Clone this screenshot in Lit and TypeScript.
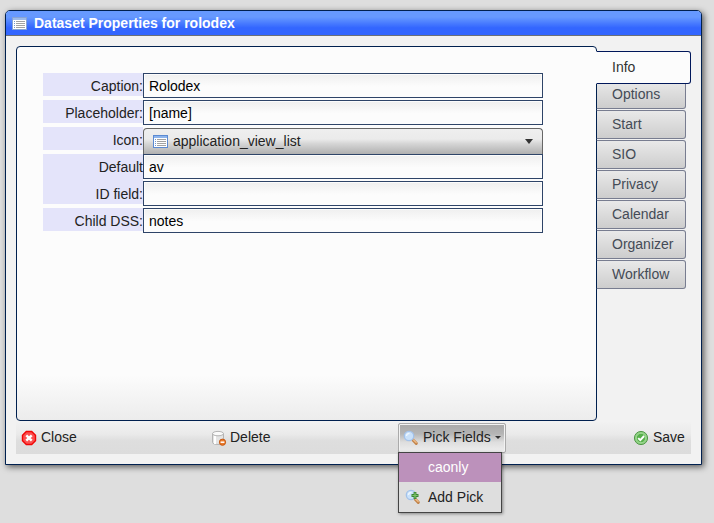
import { LitElement, html, css, svg } from "lit";
import { customElement, state } from "lit/decorators.js";
import { classMap } from "lit/directives/class-map.js";

const listIcon = (frame: string, light: string) => svg`<svg width="16" height="16" viewBox="0 0 16 16" shape-rendering="crispEdges">
  <rect x="0.5" y="2.5" width="14" height="12" fill="#fff" stroke=${frame}/>
  <rect x="1" y="3" width="13" height="2" fill=${light}/>
  <path d="M2 6.5h1M2 8.5h1M2 10.5h1M2 12.5h1" stroke="#6f97d3"/>
  <path d="M4 6.5h9M4 8.5h9M4 10.5h9M4 12.5h9" stroke="#a2a2a2"/>
</svg>`;

const closeIcon = svg`<svg width="16" height="16" viewBox="0 0 16 16">
  <path d="M5.3 1.5h5.4l3.8 3.8v5.4l-3.8 3.8H5.3l-3.8-3.8V5.3z" fill="#fb5151" stroke="#f00606" stroke-width="1.4"/>
  <path d="M5.3 5.3l5.4 5.4M10.7 5.3l-5.4 5.4" stroke="#fff" stroke-width="2.4"/>
</svg>`;

const deleteIcon = svg`<svg width="16" height="16" viewBox="0 0 16 16">
  <path d="M1.5 3.5v9c0 2.6 11 2.6 11 0v-9" fill="#e4e4e4" stroke="#b4b4b4"/>
  <path d="M4 6v8" stroke="#fff" stroke-width="2"/>
  <ellipse cx="7" cy="3.6" rx="5.5" ry="2.2" fill="#fafafa" stroke="#b4b4b4"/>
  <circle cx="11.5" cy="12.2" r="3.1" fill="#ea7a2c" stroke="#c75a14"/>
  <path d="M9.6 12.2h3.8" stroke="#fff" stroke-width="1.5"/>
</svg>`;

const lens = svg`
  <path d="M10.2 10.2l3.1 3.2" stroke="#c2834a" stroke-width="3" stroke-linecap="round"/>
  <path d="M10.6 10l2.6 2.6" stroke="#f2c08b" stroke-width="1.2" stroke-linecap="round"/>
  <circle cx="6" cy="6" r="4.7" fill="#c9e1fa" stroke="#a3c2ea" stroke-width="1.3"/>
  <path d="M3.5 6a2.6 2.6 0 0 1 3-2.5" stroke="#eef7ff" stroke-width="1.4" fill="none"/>`;
const searchIcon = svg`<svg width="16" height="16" viewBox="0 0 16 16">${lens}</svg>`;
const addSearchIcon = svg`<svg width="16" height="16" viewBox="0 0 16 16">${lens}
  <path d="M10 3v7M6.5 6.5h7" stroke="#3d8636" stroke-width="2.8"/>
  <path d="M10 3.8v5.4M7.3 6.5h5.4" stroke="#7cc469" stroke-width="1.2"/>
</svg>`;

const saveIcon = svg`<svg width="16" height="16" viewBox="0 0 16 16">
  <circle cx="8" cy="8" r="6.6" fill="#8fd083" stroke="#46913d" stroke-width=".9"/>
  <circle cx="8" cy="8" r="4.7" fill="#58b04c" stroke="#a9dfa0" stroke-width=".8"/>
  <path d="M5.2 8.1l2.1 2.1 3.8-4.2" fill="none" stroke="#fff" stroke-width="1.9"/>
</svg>`;

@customElement("app-root")
export class AppRoot extends LitElement {
  @state() private tab = "Info";

  private tabs = ["Info", "Options", "Start", "SIO", "Privacy", "Calendar", "Organizer", "Workflow"];
  private rows = [
    { label: "Caption:", value: "Rolodex" },
    { label: "Placeholder:", value: "[name]" },
    { label: "Icon:", value: "application_view_list", select: true },
    { label: "Default", value: "av", tall: true },
    { label: "ID field:", value: "" },
    { label: "Child DSS:", value: "notes" },
  ];

  static styles = css`
    :host {
      display: block;
      box-sizing: border-box;
      height: 523px;
      padding: 10px 12px 0 5px;
      background: #dedede;
      overflow: hidden;
      font: 14px/20px "Liberation Sans", Arial, sans-serif;
      color: #222;
    }
    * { box-sizing: border-box; }
    svg { display: block; flex: none; }
    .window {
      height: 455px;
      border: 1px solid #00204f;
      border-radius: 5px 5px 0 0;
      background: #f2f2f2;
      box-shadow: 2px 2px 6px rgba(0, 0, 0, 0.6);
    }
    .title {
      display: flex;
      align-items: center;
      height: 25px;
      padding-left: 6px;
      gap: 6px;
      border-bottom: 1px solid #6b7078;
      border-radius: 4px 4px 0 0;
      background: linear-gradient(#6699ff 0%, #6699ff 25%, #3366ff 70%, #3366ff 100%);
      color: #fff;
      font-weight: bold;
    }
    .body { display: flex; padding: 10px 10px 0; }
    .panel {
      width: 581px;
      height: 375px;
      padding: 26px;
      border: 1px solid #00204f;
      border-radius: 4px;
      background: linear-gradient(#fcfcfc 0%, #fcfcfc 88%, #ececec 100%);
    }
    .row { display: flex; height: 27px; }
    .label {
      width: 100px;
      height: 23px;
      padding-top: 3px;
      text-align: right;
      background: #e4e4fa;
    }
    .label.tall { height: 27px; }
    .field {
      display: flex;
      align-items: center;
      width: 400px;
      height: 25px;
      padding: 0 5px;
      border: 1px solid #2e4468;
      background: linear-gradient(#efefef, #fcfcfc 55%);
      box-shadow: inset 0 0 0 1px #fcfcfc;
      color: #000;
    }
    .select {
      height: 26px;
      margin-top: 1px;
      padding: 0 9px;
      gap: 4px;
      border: 1px solid #666;
      border-bottom-width: 0;
      border-radius: 4px 4px 0 0;
      background: linear-gradient(#efefef 0%, #ebebeb 40%, #d4d4d4 60%, #b0b0b0 100%);
      box-shadow: none;
      color: #222;
    }
    .select svg { margin-top: -2px; }
    .select span { margin-top: -1px; }
    .arrow {
      margin-left: auto;
      border: 4px solid transparent;
      border-top: 5px solid #333;
      border-bottom: 0;
    }
    .tabs {
      display: flex;
      flex-direction: column;
      gap: 1px;
      padding-top: 5px;
      margin-left: -1px;
    }
    .tab {
      width: 90px;
      height: 29px;
      padding: 3px 0 0 15px;
      border: 1px solid #787d90;
      border-left: 1px solid #00204f;
      border-radius: 0 3px 3px 0;
      background: linear-gradient(#e9e9e9, #cdcdcd);
      color: #444b56;
    }
    .tab.active {
      position: relative;
      width: 95px;
      height: 33px;
      padding-top: 5px;
      margin-bottom: -5px;
      border: 1px solid #00175a;
      border-left: 1px solid #fcfcfc;
      background: #fcfcfc;
      color: #333;
    }
    .toolbar {
      display: flex;
      position: relative;
      height: 33px;
      margin: 0 10px;
      background: linear-gradient(#f2f2f2, #eaeaea 40%, #dedede 60%, #dcdcdc);
    }
    .btn { display: flex; align-items: center; gap: 4px; padding-left: 5px; width: 190px; }
    .btn span { margin-top: -2px; }
    .delete { gap: 3px; }
    .pick {
      position: relative;
      width: 108px;
      height: 30px;
      margin: 2px 122px 0 2px;
      padding: 0 0 1px 4px;
      gap: 4px;
      border: 1px solid #aaa;
      border-radius: 2px;
      background: linear-gradient(#a9a9a9, #b5b5b5 35%, #dedede 65%, #eee);
      box-shadow: inset 0 0 0 1px #f2f2f2;
    }
    .pick .arrow { margin: 0 4px 0 auto; border-width: 3px 3px 0; }
    .menu {
      position: absolute;
      z-index: 2;
      top: 28px;
      left: -1px;
      width: 104px;
      height: 61px;
      border: 1px solid #444;
      background: #dedede;
      box-shadow: 1px 1px 3px rgba(0, 0, 0, 0.4);
    }
    .item { display: flex; align-items: center; gap: 7px; height: 30px; padding-left: 6px; }
    .item span { margin-top: 0; }
    .item.hot { height: 29px; padding-left: 29px; background: #bc91bb; color: #fff; }
    .item.hot span { margin-top: -1px; }
    .save { width: auto; }
  `;

  render() {
    return html`
      <div class="window">
        <div class="title">${listIcon("#86a3d6", "#9dbbe9")}<span>Dataset Properties for rolodex</span></div>
        <div class="body">
          <div class="panel">
            ${this.rows.map((r) => html`
              <div class="row">
                <div class=${classMap({ label: true, tall: !!r.tall })}>${r.label}</div>
                <div class=${classMap({ field: true, select: !!r.select })}>
                  ${r.select ? listIcon("#5b8ad2", "#8db4ec") : ""}<span>${r.value}</span>
                  ${r.select ? html`<i class="arrow"></i>` : ""}
                </div>
              </div>`)}
          </div>
          <div class="tabs">
            ${this.tabs.map((t) => html`
              <div class=${classMap({ tab: true, active: t === this.tab })} @click=${() => (this.tab = t)}>${t}</div>`)}
          </div>
        </div>
        <div class="toolbar">
          <div class="btn">${closeIcon}<span>Close</span></div>
          <div class="btn delete">${deleteIcon}<span>Delete</span></div>
          <div class="btn pick">
            ${searchIcon}<span>Pick Fields</span><i class="arrow"></i>
            <div class="menu">
              <div class="item hot"><span>caonly</span></div>
              <div class="item">${addSearchIcon}<span>Add Pick</span></div>
            </div>
          </div>
          <div class="btn save">${saveIcon}<span>Save</span></div>
        </div>
      </div>`;
  }
}
